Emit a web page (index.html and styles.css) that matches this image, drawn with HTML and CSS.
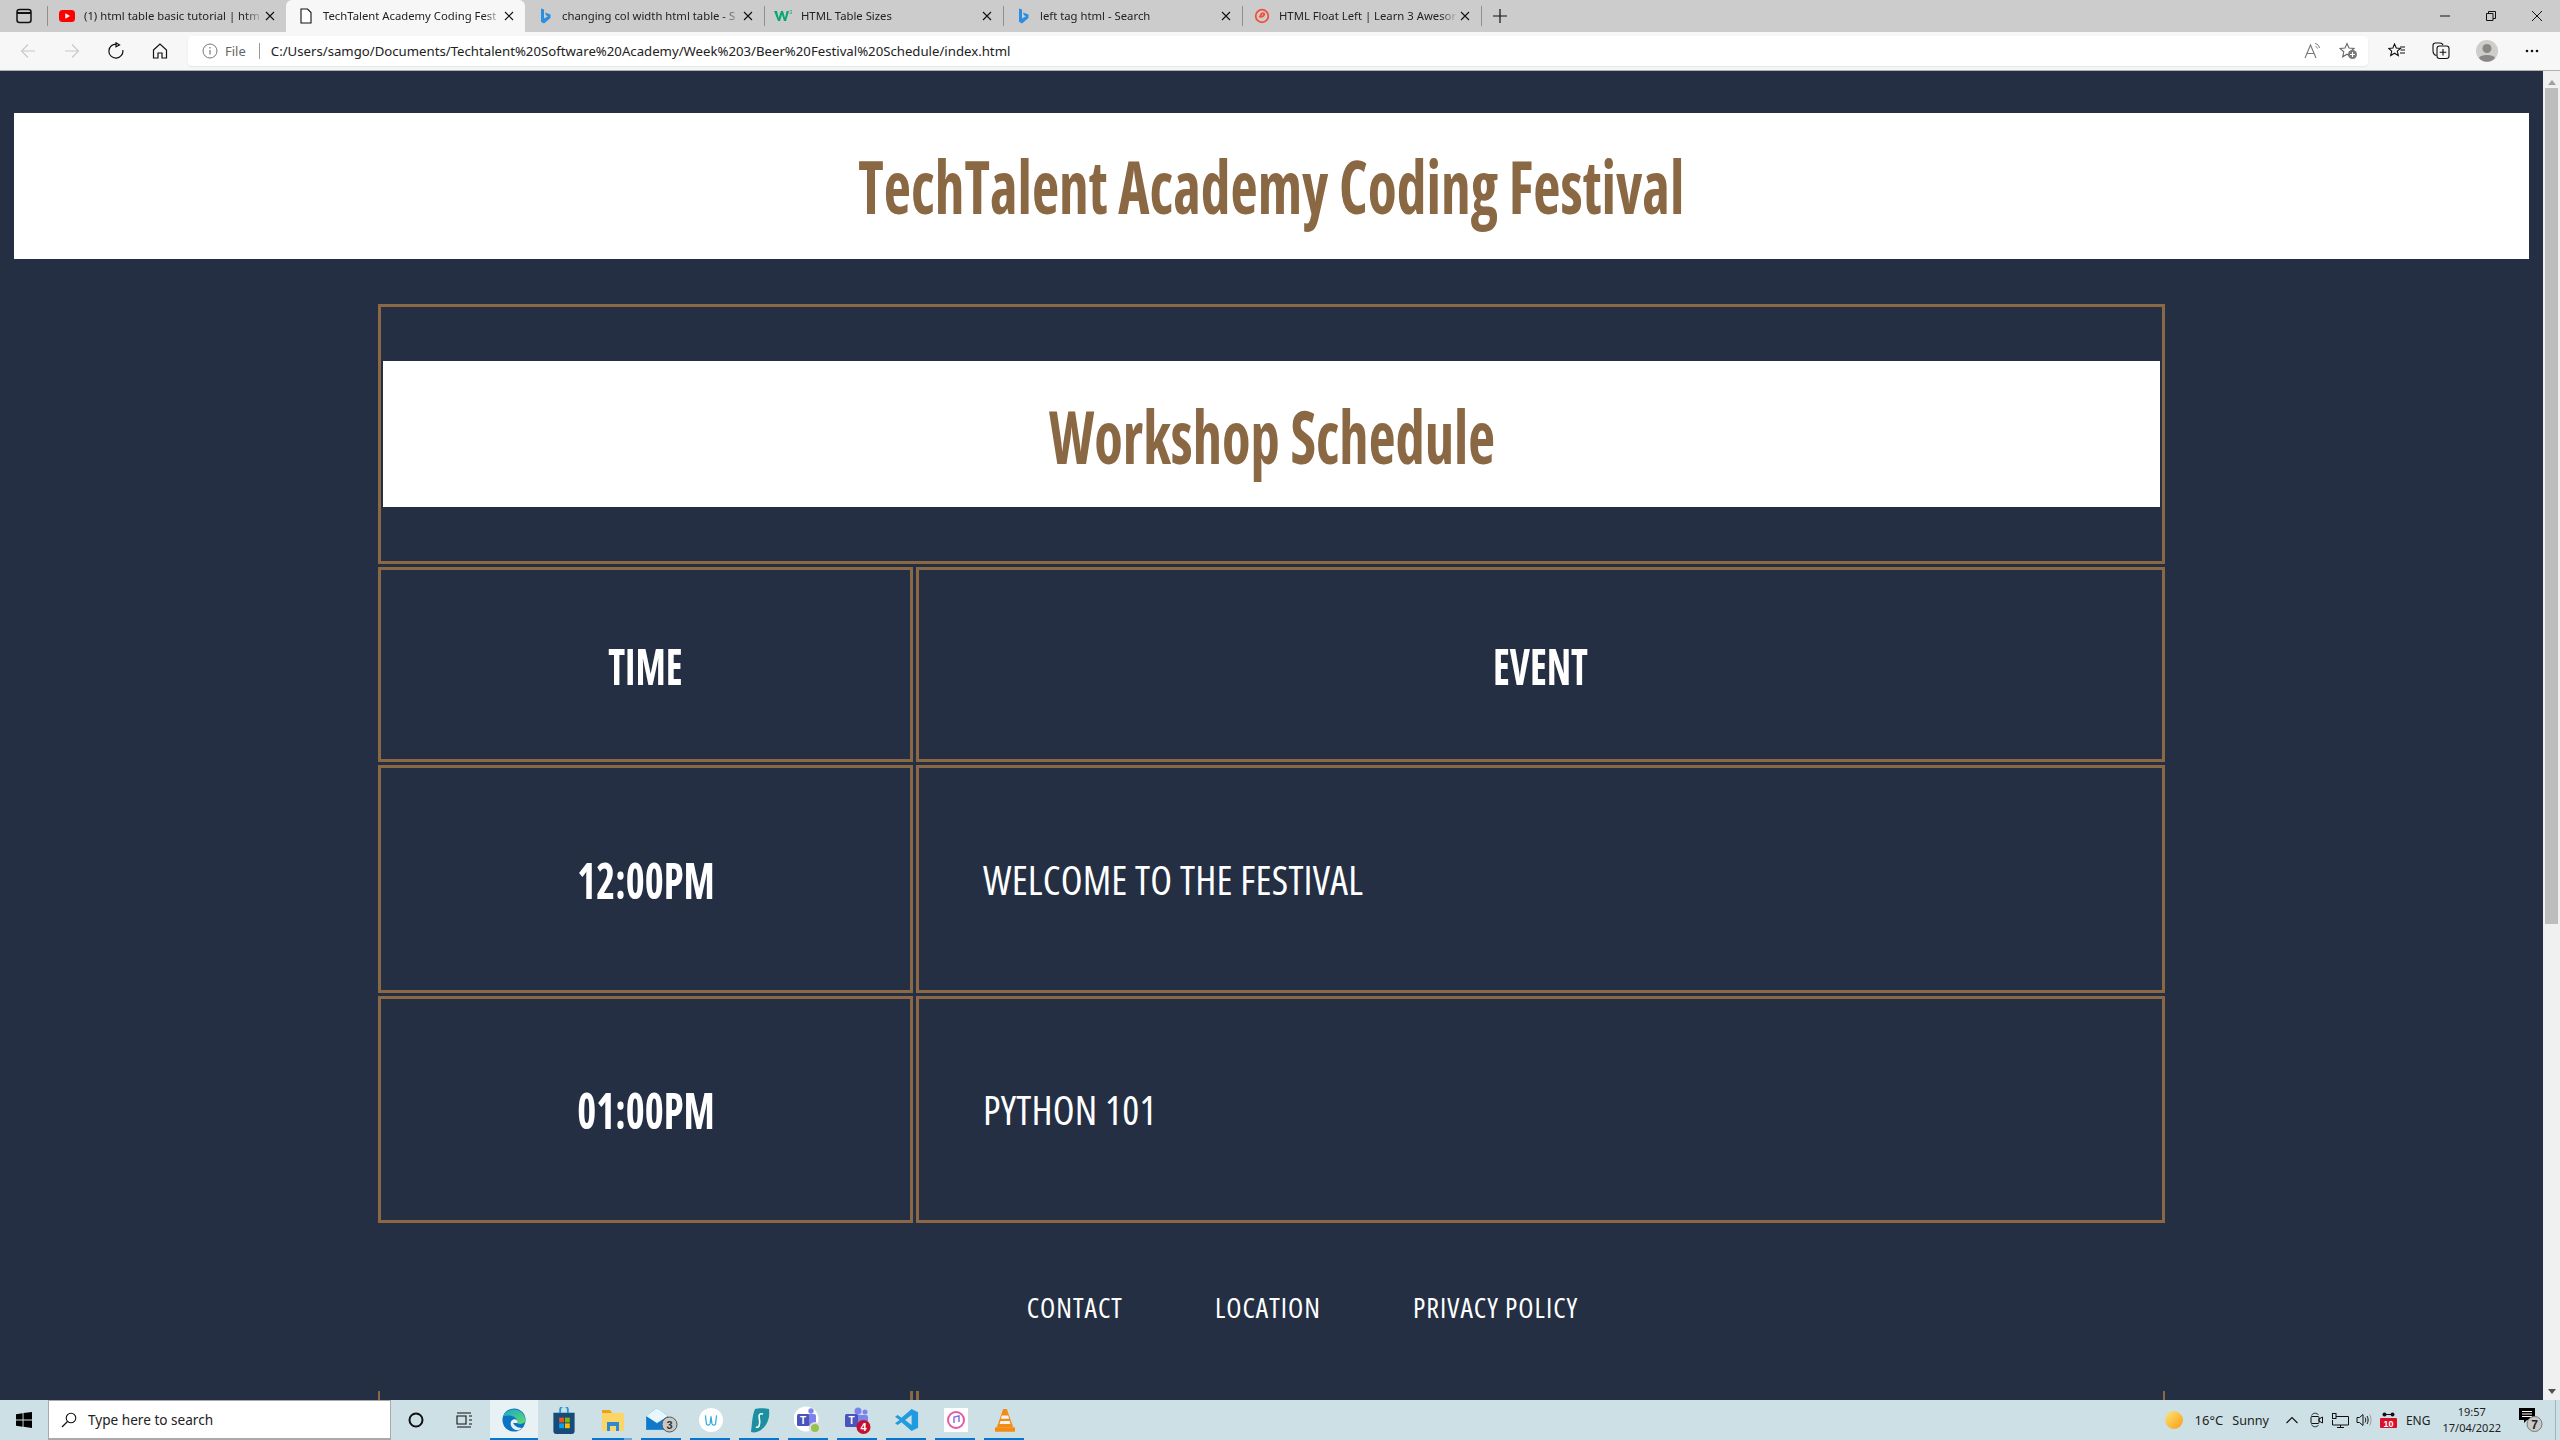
FILE: index.html
```html
<!DOCTYPE html>
<html lang="en">
<head>
<meta charset="utf-8">
<title>TechTalent Academy Coding Festival</title>
<link rel="stylesheet" href="styles.css">
</head>
<body>
<div class="window">
  <div class="tabstrip">
    <svg class="tabside" width="18" height="18" viewBox="0 0 18 18"><rect x="2" y="2.500" width="14" height="13" rx="2.500" fill="none" stroke="#111" stroke-width="1.500"/><path d="M2 6h14" stroke="#111" stroke-width="2"/></svg>
    <div class="tabsep"></div>
    <div class="tab"><svg class="fav" width="16" height="16" viewBox="0 0 16 16"><rect y="2" width="16" height="12" rx="3.500" fill="#f00"/><path d="M6.300 5.200v5.600L11 8z" fill="#fff"/></svg><span class="tabtext">(1) html table basic tutorial | htm</span><svg class="x" width="10" height="10" viewBox="0 0 10 10"><path d="M1 1l8 8M9 1L1 9" stroke="#111" stroke-width="1.100"/></svg></div>
    <div class="tab active"><svg class="fav" width="16" height="16" viewBox="0 0 16 16"><path d="M3 1h6.500L13 4.500V15H3z" fill="#fff" stroke="#111" stroke-width="1.100"/></svg><span class="tabtext">TechTalent Academy Coding Fest</span><svg class="x" width="10" height="10" viewBox="0 0 10 10"><path d="M1 1l8 8M9 1L1 9" stroke="#111" stroke-width="1.100"/></svg></div>
    <div class="tab"><svg class="fav" width="16" height="16" viewBox="0 0 16 16"><path d="M4 .500l3 1v9l4-2.300-2-1-1-2.600 5.500 2v3.400L7 15.500l-3-1.800z" fill="#2a8fe0"/></svg><span class="tabtext">changing col width html table - S</span><svg class="x" width="10" height="10" viewBox="0 0 10 10"><path d="M1 1l8 8M9 1L1 9" stroke="#111" stroke-width="1.100"/></svg></div>
    <div class="tabsep"></div>
    <div class="tab"><svg class="fav" width="18" height="16" viewBox="0 0 18 16"><path d="M0 3h3l1.600 7L7 3h2l2 7 1.600-7H15l-3 10h-2L8 6.500 6 13H4z" fill="#04aa6d"/><text class="w3" x="15" y="6">3</text></svg><span class="tabtext">HTML Table Sizes</span><svg class="x" width="10" height="10" viewBox="0 0 10 10"><path d="M1 1l8 8M9 1L1 9" stroke="#111" stroke-width="1.100"/></svg></div>
    <div class="tabsep"></div>
    <div class="tab"><svg class="fav" width="16" height="16" viewBox="0 0 16 16"><path d="M4 .500l3 1v9l4-2.300-2-1-1-2.600 5.500 2v3.400L7 15.500l-3-1.800z" fill="#2a8fe0"/></svg><span class="tabtext">left tag html - Search</span><svg class="x" width="10" height="10" viewBox="0 0 10 10"><path d="M1 1l8 8M9 1L1 9" stroke="#111" stroke-width="1.100"/></svg></div>
    <div class="tabsep"></div>
    <div class="tab"><svg class="fav" width="16" height="16" viewBox="0 0 16 16"><circle cx="8" cy="8" r="6.300" fill="none" stroke="#f0503c" stroke-width="1.800"/><path d="M5 8.500c3 1 6-1 5-3-1.500-1-4 .5-3.500 3.500" fill="none" stroke="#f0503c" stroke-width="1.800"/></svg><span class="tabtext">HTML Float Left | Learn 3 Awesor</span><svg class="x" width="10" height="10" viewBox="0 0 10 10"><path d="M1 1l8 8M9 1L1 9" stroke="#111" stroke-width="1.100"/></svg></div>
    <div class="tabsep"></div>
    <svg class="plus" width="16" height="16" viewBox="0 0 16 16"><path d="M8 1v14M1 8h14" stroke="#111" stroke-width="1.200"/></svg>
    <div class="winctrls">
      <svg width="12" height="12" viewBox="0 0 12 12"><path d="M1 6h10" stroke="#111"/></svg>
      <svg width="12" height="12" viewBox="0 0 12 12"><path d="M1.500 3.500h6.500v7h-6.500z M3.500 3.500v-2h7v7h-2.500" fill="none" stroke="#111"/></svg>
      <svg width="12" height="12" viewBox="0 0 12 12"><path d="M1 1l10 10M11 1L1 11" stroke="#111"/></svg>
    </div>
  </div>
  <div class="toolbar">
    <div class="navs">
      <svg width="16" height="16" viewBox="0 0 16 16"><path d="M15 8H1.500M8 1.500L1.500 8 8 14.500" fill="none" stroke="#c8c8c8" stroke-width="1.100"/></svg>
      <svg width="16" height="16" viewBox="0 0 16 16"><path d="M1 8h13.500M8 1.500L14.500 8 8 14.500" fill="none" stroke="#c8c8c8" stroke-width="1.100"/></svg>
      <svg width="18" height="18" viewBox="0 0 18 18"><path d="M9.800 2.200A7 7 0 1 0 15.800 8M9 .8v4l3.500-1.800z" fill="none" stroke="#111" stroke-width="1.200"/></svg>
      <svg width="18" height="18" viewBox="0 0 18 18"><path d="M2.500 8L9 2l6.500 6v8h-4.500v-5h-4v5H2.500z" fill="none" stroke="#111" stroke-width="1.200"/></svg>
    </div>
    <div class="addr">
      <svg width="16" height="16" viewBox="0 0 16 16"><circle cx="8" cy="8" r="7" fill="none" stroke="#777"/><path d="M8 7v4.500M8 4v1.500" stroke="#777" stroke-width="1.200"/></svg>
      <span class="file">File</span>
      <span class="addrsep"></span>
      <span class="url">C:/Users/samgo/Documents/Techtalent%20Software%20Academy/Week%203/Beer%20Festival%20Schedule/index.html</span>
      <svg class="readout" width="20" height="18" viewBox="0 0 20 18"><path d="M1 16L6.500 3 12 16M3 11.500h7" fill="none" stroke="#777" stroke-width="1.100"/><path d="M11 1.500c2.500.5 4 2 4.500 4.500M11.500 4.500c1.200.3 1.700 1 2 2" fill="none" stroke="#777"/></svg>
      <svg class="favadd" width="20" height="18" viewBox="0 0 20 18"><path d="M8 1.500l2 4.500 5 .5-3.800 3.300 1.100 5L8 12.200 3.700 14.800l1.100-5L1 6.500 6 6z" fill="none" stroke="#666" stroke-width="1.100"/><circle cx="13.500" cy="12.500" r="4.500" fill="#777"/><path d="M13.500 10v5M11 12.500h5" stroke="#fff" stroke-width="1.100"/></svg>
    </div>
    <div class="tools">
      <svg width="18" height="16" viewBox="0 0 18 16"><path d="M6.500 1l1.800 4 4.200.4-3.200 2.800 1 4.300-3.800-2.300L2.700 12.500l1-4.300L.7 5.400 4.900 5z" fill="none" stroke="#111" stroke-width="1.100"/><path d="M12 4h5M12.500 7h4.500M12 10h5" stroke="#111"/></svg>
      <svg width="18" height="18" viewBox="0 0 18 18"><path d="M4.500 13.500C2 13 1 11 1 8.500V3.500C1 2 2 1 3.500 1H8c1.500 0 2.500.8 3 2" fill="none" stroke="#111" stroke-width="1.100"/><rect x="5" y="4" width="12" height="12.500" rx="2.500" fill="#f6f6f6" stroke="#111" stroke-width="1.100"/><path d="M11 7v6.500M7.700 10.200h6.600" stroke="#111" stroke-width="1.100"/></svg>
      <svg width="22" height="22" viewBox="0 0 22 22"><circle cx="11" cy="11" r="11" fill="#cfcdca"/><circle cx="11" cy="8.500" r="4.500" fill="#8a8886"/><path d="M3 18c1-4 15-4 16 0-4 5-12 5-16 0z" fill="#8a8886"/></svg>
      <svg width="16" height="6" viewBox="0 0 16 6"><circle cx="3" cy="3" r="1.300" fill="#111"/><circle cx="8" cy="3" r="1.300" fill="#111"/><circle cx="13" cy="3" r="1.300" fill="#111"/></svg>
    </div>
  </div>
  <div class="viewport">
    <main class="page">
      <header class="sitehead"><h1>TechTalent Academy Coding Festival</h1></header>
      <table class="schedule">
        <colgroup><col class="col-time"><col class="col-event"></colgroup>
        <thead>
          <tr><th colspan="2" class="titlecell"><div class="titlebar"><h2>Workshop Schedule</h2></div></th></tr>
          <tr class="r-head"><th><span class="squeeze">TIME</span></th><th><span class="squeeze">EVENT</span></th></tr>
        </thead>
        <tbody>
          <tr class="r-a"><th><span class="squeeze clock-time">12:00PM</span></th><td>WELCOME TO THE FESTIVAL</td></tr>
          <tr class="r-b"><th><span class="squeeze clock-time">01:00PM</span></th><td>PYTHON 101</td></tr>
        </tbody>
      </table>
      <nav class="footlinks"><a>CONTACT</a><a>LOCATION</a><a>PRIVACY POLICY</a></nav>
      <table class="schedule next">
        <colgroup><col class="col-time"><col class="col-event"></colgroup>
        <tr><td></td><td></td></tr>
      </table>
    </main>
    <div class="scrollbar">
      <span class="arrow up"></span>
      <span class="thumb"></span>
      <span class="arrow down"></span>
    </div>
  </div>
  <footer class="taskbar">
    <svg class="start" width="16" height="16" viewBox="0 0 16 16"><path d="M0 2.300l6.600-1v6.300H0zM7.500 1.100L16 0v7.600H7.500zM0 8.400h6.600v6.300L0 13.700zM7.500 8.400H16V16l-8.500-1.200z" fill="#000"/></svg>
    <div class="search">
      <svg width="16" height="16" viewBox="0 0 16 16"><circle cx="10" cy="6" r="4.800" fill="none" stroke="#111" stroke-width="1.100"/><path d="M6.500 9.500L1 15" stroke="#111" stroke-width="1.200"/></svg>
      <span>Type here to search</span>
    </div>
    <svg class="cortana" width="16" height="16" viewBox="0 0 16 16"><circle cx="8" cy="8" r="6.500" fill="none" stroke="#111" stroke-width="2"/></svg>
    <svg class="taskview" width="16" height="16" viewBox="0 0 16 16"><path d="M1 1h14M1 15h14M1 4h9v8H1zM13 4h3M13 8h3M13 12h3" fill="none" stroke="#111" stroke-width="1.100"/></svg>
    <div class="apps">
      <div class="app on"><svg width="24" height="24" viewBox="0 0 26 26"><defs><linearGradient id="edgeg" x1="0" y1="0" x2="1" y2="1"><stop offset="0" stop-color="#1aa8c8"/><stop offset="1" stop-color="#62d96c"/></linearGradient></defs><circle cx="13" cy="13" r="12.500" fill="#0c72c4"/><path d="M1.500 9C5-1 23-2 25.500 13c.4 3.500-5 5.500-9 3.500 1-7-7-10-15-7.500z" fill="url(#edgeg)"/><path d="M10.500 13.500c3-2.500 6.500-1 6.500 2.500-2 .3-3.500.5-5 0 1.500 4 6 6 10 5.500-1 1-2.500 2-4.500 2.500-7 0-10-7-7-10.500z" fill="#e8f1f4"/></svg></div>
      <div class="app off"><svg width="24" height="27" viewBox="0 0 24 28"><path d="M8 6V3a4 4 0 0 1 8 0v3" fill="none" stroke="#1d9bd8" stroke-width="2"/><path d="M1 6h22v19a3 3 0 0 1-3 3H4a3 3 0 0 1-3-3z" fill="#154a7a"/><rect x="7" y="11" width="5" height="5" fill="#f25022"/><rect x="13" y="11" width="5" height="5" fill="#7fba00"/><rect x="7" y="17" width="5" height="5" fill="#00a4ef"/><rect x="13" y="17" width="5" height="5" fill="#ffb900"/></svg></div>
      <div class="app part"><svg width="22" height="21" viewBox="0 0 22 21"><path d="M0 0h8l2 3H0z" fill="#e8a317"/><path d="M0 3h22v18H0z" fill="#fbd667"/><path d="M5 12h12v9h-3v-5H8v5H5z" fill="#2a8ad4"/></svg></div>
      <div class="app"><svg width="33" height="26" viewBox="0 0 33 26"><path d="M1 9L12 1l11 8v14H1z" fill="#1b8fd9"/><path d="M1 9l11 7 11-7-11-8z" fill="#e8f6fe"/><path d="M2 10l10 7 10-7v12H2z" fill="#1378c7"/><circle cx="24.500" cy="17.500" r="7.500" fill="#c8c8c8" stroke="#555"/><text class="badge3" x="24.500" y="21.500">3</text></svg></div>
      <div class="app"><svg width="24" height="24" viewBox="0 0 26 26"><circle cx="13" cy="13" r="13" fill="#fff"/><path d="M7 8l1 9c.3 2 3.500 2 4 0l1-8 1 8c.5 2 3.700 2 4 0l1-9" fill="none" stroke="#2dabe0" stroke-width="1.300"/></svg></div>
      <div class="app"><svg width="20" height="25" viewBox="0 0 20 25"><path d="M5 1C8 0 15 0 19 1 20 9 18 17 11 22 8 24 4 25 1 24 2 17 2 8 5 1z" fill="#1c8fa0"/><path d="M13 6c-3-1-4.500.5-3.800 3.500.7 3 .7 5.500 0 8-.4 1.500-2 2.200-3.200 1.500" fill="none" stroke="#fff" stroke-width="1.600"/></svg></div>
      <div class="app"><svg width="30" height="30" viewBox="0 0 30 30"><circle cx="12" cy="14" r="12.500" fill="#fff"/><circle cx="17" cy="6" r="2.700" fill="#7b83eb"/><rect x="12" y="9" width="10" height="12" rx="2" fill="#7b83eb"/><rect x="3" y="9" width="12" height="12" rx="1.500" fill="#4b53bc"/><text class="letter" x="9" y="18.500">T</text><circle cx="21" cy="23" r="6" fill="#ddd"/><circle cx="21" cy="23" r="4" fill="#92c353"/></svg></div>
      <div class="app"><svg width="28" height="30" viewBox="0 0 28 30"><circle cx="14" cy="6" r="3.500" fill="#7b83eb"/><circle cx="21" cy="7" r="2.500" fill="#7b83eb"/><rect x="10" y="10" width="14" height="12" rx="2" fill="#7b83eb"/><rect x="1" y="9" width="13" height="13" rx="1.500" fill="#4b53bc"/><text class="letter" x="7.500" y="19">T</text><circle cx="19.500" cy="22" r="7" fill="#c4112f"/><text class="badge4" x="19.500" y="26">4</text></svg></div>
      <div class="app"><svg width="24" height="24" viewBox="0 0 26 26"><path d="M18 1l7 3.500v17L18 25 7 15.500l-4 3-3-2 5-3.500-5-3.500 3-2 4 3z" fill="#1f9ce0"/><path d="M18 7.500v11L11 13z" fill="#cde0e6"/></svg></div>
      <div class="app"><svg width="24" height="24" viewBox="0 0 24 24"><rect width="24" height="24" fill="#fff"/><circle cx="12" cy="12" r="8" fill="none" stroke="#e659a8" stroke-width="2"/><path d="M10 15v-6l5-1v6" fill="none" stroke="#8a6fe0" stroke-width="1.500"/></svg></div>
      <div class="app"><svg width="20" height="24" viewBox="0 0 22 26"><path d="M9 1h4l7 20H2z" fill="#f28c13"/><path d="M7.500 8h7l1 3.500h-9zM6 14h10l1 3.500H5z" fill="#f3f3f3"/><rect y="21" width="22" height="5" rx="1" fill="#f28c13"/></svg></div>
    </div>
    <div class="tray">
      <svg class="sun" width="18" height="18" viewBox="0 0 18 18"><defs><linearGradient id="sung" x1="0" y1="0" x2="1" y2="1"><stop offset="0" stop-color="#fbe77a"/><stop offset="1" stop-color="#fb9a10"/></linearGradient></defs><circle cx="9" cy="9" r="9" fill="url(#sung)"/></svg>
      <span class="temp">16°C</span>
      <span class="sky">Sunny</span>
      <svg class="chev" width="12" height="8" viewBox="0 0 12 8"><path d="M.5 7L6 1.500 11.500 7" fill="none" stroke="#111" stroke-width="1.100"/></svg>
      <svg class="meet" width="13" height="16" viewBox="0 0 13 16"><path d="M1.500 3.500C3 .5 7 .5 8.500 3M1.500 12.500c1.500 3 5.500 3 7 .5" fill="none" stroke="#111" stroke-width=".8"/><rect x="1" y="4.500" width="8" height="7" rx="1" fill="none" stroke="#111"/><path d="M9 7l3.500-2v6L9 9z" fill="none" stroke="#111"/></svg>
      <svg class="net" width="17" height="15" viewBox="0 0 17 15"><path d="M4 3.500h12.500v8.500H.5V7M8.500 12v2.500M5 14.500h7" fill="none" stroke="#111"/><rect x=".5" y=".5" width="3.500" height="5" fill="#cde0e6" stroke="#111"/></svg>
      <svg class="vol" width="16" height="14" viewBox="0 0 16 14"><path d="M1 4.500h2.500L7 1.500v11l-3.500-3H1z" fill="none" stroke="#111"/><path d="M9 4.500c1 1.500 1 3.500 0 5M11 3c1.500 2 1.500 6 0 8" fill="none" stroke="#111"/><path d="M13.500 1.500c2 3 2 8 0 11" fill="none" stroke="#999"/></svg>
      <svg class="cal" width="17" height="16" viewBox="0 0 17 16"><circle cx="4.500" cy="2.500" r="2" fill="#111"/><circle cx="12.500" cy="2.500" r="2" fill="#111"/><path d="M6 2.500h5" stroke="#111"/><rect y="6" width="17" height="10" rx="1" fill="#d8102a"/><text class="caltext" x="8.500" y="14.500">10</text></svg>
      <span class="lang">ENG</span>
      <div class="clock"><span>19:57</span><span>17/04/2022</span></div>
      <svg class="notif" width="26" height="28" viewBox="0 0 26 28"><path d="M1 2h16v12H9l-3 3v-3H1z" fill="#000"/><path d="M4 5.500h10M4 8h10M4 10.500h10" stroke="#fff"/><circle cx="16.500" cy="18" r="7.500" fill="#c9c9c9" stroke="#777"/><text class="notiftext" x="16.500" y="22.500">7</text></svg>
      <span class="showdesk"></span>
    </div>
  </footer>
</div>
</body>
</html>
```
FILE: styles.css
```css
* { box-sizing: border-box; }
html, body { margin: 0; padding: 0; height: 100%; overflow: hidden; }
body { font-family: "Open Sans", "Liberation Sans", sans-serif; color: #111; }
.window { display: flex; flex-direction: column; width: 2560px; height: 1440px; overflow: hidden; }

.tabstrip { display: flex; align-items: center; height: 32px; background: #cccccc; flex: none; }
.tabside { margin: 0 14px 0 15px; flex: none; }
.tabsep { width: 1px; height: 20px; background: #8f8f8f; flex: none; margin-right: -1px; }
.tab { display: flex; align-items: center; flex: none; width: 239px; height: 32px; padding: 0 11px 0 12px; }
.active { background: #f7f7f7; border-radius: 6px 6px 0 0; }
.fav { flex: none; margin-right: 9px; }
.tabtext { flex: 1; min-width: 0; white-space: nowrap; font-family: "Noto Sans", sans-serif; font-size: 11.3px; color: #222; padding-bottom: 2px; -webkit-mask-image: linear-gradient(90deg, #000 90%, transparent 100%); mask-image: linear-gradient(90deg, #000 90%, transparent 100%); }
.x { flex: none; margin-left: 2px; }
.tabsep + .tab .fav[width="18"] { margin-left: -2px; }
.plus { margin-left: 11px; flex: none; }
.winctrls { margin-left: auto; display: flex; gap: 34px; padding-right: 17px; }
.w3 { font-family: "Liberation Sans", sans-serif; font-size: 6px; fill: #04aa6d; }

.toolbar { display: flex; align-items: center; height: 39px; background: #f7f7f7; border-bottom: 1px solid #b0b0b0; flex: none; }
.navs { display: grid; grid-template-columns: repeat(4, 44px); justify-items: center; align-items: center; width: 188px; padding-left: 6px; flex: none; }
.addr { display: flex; align-items: center; width: 2180px; height: 30px; background: #fff; border-radius: 4px; box-shadow: 0 1px 2px rgba(0,0,0,.08); padding-left: 14px; flex: none; }
.file { font-size: 13px; color: #666; margin-left: 7px; font-family: "Noto Sans", sans-serif; }
.addrsep { width: 1px; height: 16px; background: #999; margin: 0 11px 0 13px; }
.url { font-size: 13.2px; color: #222; font-family: "Noto Sans", sans-serif; }
.readout { margin-left: auto; }
.favadd { margin: 0 9px 0 15px; }
.tools { display: flex; align-items: center; padding-left: 20px; gap: 26px; }

.viewport { display: flex; flex: 1; min-height: 0; background: #242f44; overflow: hidden; }
.page { flex: 1; min-width: 0; height: 1329px; overflow: hidden; padding: 42px 14px 0; }
.sitehead { height: 146px; background: #fff; display: flex; align-items: center; justify-content: center; }
h1, h2 { margin: 0; font-family: "Open Sans", sans-serif; font-stretch: 75%; font-weight: 700; color: #8b6844; font-size: 74px; line-height: 1; }
h1 { transform: scaleX(.803); }
h2 { transform: scaleX(.791); padding-top: 4px; }

.schedule { table-layout: fixed; width: 1793px; border-spacing: 3px; border-collapse: separate; margin: 42px 0 0 361px; color: #fff; font-family: "Open Sans", sans-serif; font-stretch: 75%; }
.col-time { width: 535px; }
.schedule th, .schedule td { border: 3px solid #8b6844; padding: 0; }
.schedule th { font-size: 50px; font-weight: 700; text-align: center; padding-top: 3px; }
.squeeze { display: inline-block; transform: scaleX(.785); }
.squeeze.clock-time { transform: scaleX(.81); }
.schedule td { font-size: 40px; font-weight: 500; padding-left: 64px; letter-spacing: .2px; padding-top: 1px; }
.schedule .titlecell { height: 260px; padding: 0 2px; }
.titlebar { height: 146px; background: #fff; display: flex; align-items: center; justify-content: center; }
.r-head th { height: 195px; }
.r-a th, .r-a td { height: 228px; }
.r-b th, .r-b td { height: 227px; }
.schedule .r-a th, .schedule .r-b th { padding-top: 1px; }
.schedule .r-b td { padding-top: 0; }

.footlinks { display: flex; justify-content: center; gap: 92px; margin-top: 61px; height: 40px; align-items: center; padding-left: 62px; }
.footlinks a { font-family: "Open Sans", sans-serif; font-stretch: 75%; font-weight: 500; font-size: 28px; color: #fff; letter-spacing: 1px; }
.schedule.next { margin-top: 61px; }
.schedule.next td { height: 200px; padding: 0; border-top: 0; border-left-width: 2px; border-right-width: 3px; }
.schedule.next td + td { border-left-width: 3px; border-right-width: 2px; }

.scrollbar { width: 17px; flex: none; background: #f0f0f0; display: flex; flex-direction: column; align-items: center; height: 1329px; }
.thumb { width: 13px; height: 836px; background: #bdbdbd; }
.arrow { display: block; width: 0; height: 0; border-left: 4px solid transparent; border-right: 4px solid transparent; }
.arrow.up { border-bottom: 5px solid #a0a0a0; margin: 9px 0 3px; }
.arrow.down { border-top: 5px solid #505050; margin-top: auto; margin-bottom: 6px; }

.taskbar { display: flex; align-items: center; height: 40px; flex: none; background: #cde0e6; }
.start { margin-left: 16px; flex: none; }
.search { display: flex; align-items: center; width: 343px; height: 40px; margin-left: 16px; background: #fff; border: 1px solid #aaa; border-bottom-width: 2px; padding-left: 12px; font-size: 14px; color: #222; flex: none; }
.search span { margin-left: 11px; font-family: "Noto Sans", sans-serif; font-size: 13.6px; }
.cortana { margin-left: 17px; flex: none; }
.taskview { margin-left: 32px; flex: none; }
.apps { display: flex; margin-left: 18px; flex: none; }
.app { width: 49px; height: 40px; display: flex; align-items: center; justify-content: center; position: relative; }
.app::after { content: ""; position: absolute; left: 4px; right: 5px; bottom: 0; height: 2px; background: #0078d4; }
.app.on { width: 48px; margin-right: 1px; background: #e8f1f4; }
.app.on::after { left: 0; right: 0; }
.app.off::after { display: none; }
.app.part::after { background: linear-gradient(90deg, #0078d4 80%, #6aa9e0 80%); }
.tray { margin-left: auto; display: flex; align-items: center; height: 40px; font-family: "Noto Sans", sans-serif; font-size: 13px; color: #222; flex: none; }
.temp { margin-left: 12px; }
.sky { margin-left: 9px; font-size: 12.6px; }
.chev { margin-left: 17px; }
.meet { margin-left: 12px; }
.net { margin-left: 9px; }
.vol { margin-left: 7px; }
.cal { margin-left: 8px; }
.lang { margin-left: 9px; font-size: 12px; }
.clock { display: flex; flex-direction: column; align-items: center; margin-left: 12px; font-size: 11px; line-height: 16px; }
.notif { margin-left: 17px; }
.showdesk { width: 1px; height: 40px; background: #9fb4bb; margin: 0 4px 0 11px; }
.badge3, .notiftext, .badge4, .letter, .caltext { font-family: "Liberation Sans", sans-serif; font-weight: 700; text-anchor: middle; }
.badge3 { font-size: 11px; fill: #333; }
.notiftext { font-size: 12px; fill: #222; }
.badge4 { font-size: 11px; fill: #fff; }
.letter { font-size: 10px; fill: #fff; }
.caltext { font-size: 9px; fill: #fff; }
```
